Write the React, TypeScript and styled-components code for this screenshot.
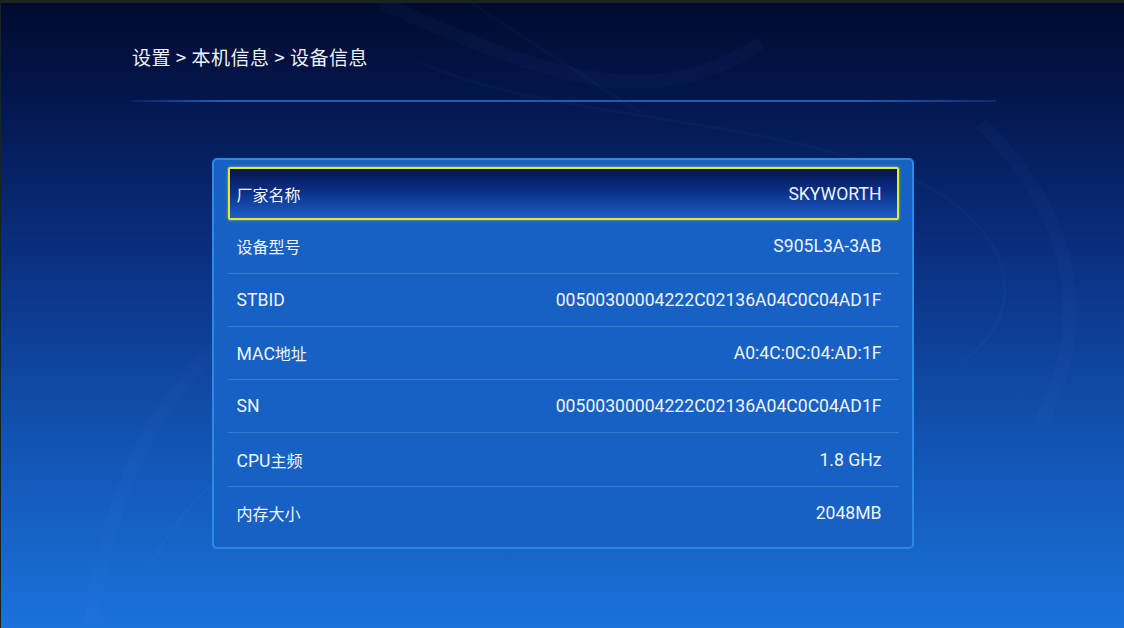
import React from "react";
import styled, { createGlobalStyle } from "styled-components";

const GlobalStyle = createGlobalStyle`
  html, body {
    margin: 0;
    padding: 0;
    background: #1c2420;
  }
  body {
    font-family: Roboto, "Noto Sans CJK SC", sans-serif;
  }
`;

const Screen = styled.div`
  position: relative;
  width: 1123px;
  height: 625px;
  margin: 3px 0 0 1px;
  overflow: hidden;
  background: linear-gradient(
    180deg,
    #010b2e 0%,
    #03154a 14%,
    #0a2f80 40%,
    #1253b2 70%,
    #1a72da 100%
  );
  display: flex;
  flex-direction: column;
`;

const Swirls = styled.svg`
  position: absolute;
  inset: 0;
  pointer-events: none;
`;

const Header = styled.header`
  position: relative;
  margin: 0 128px 0 131px;
  padding-top: 40px;
`;

const Crumbs = styled.h1`
  margin: 0;
  font-size: 19px;
  font-weight: 400;
  line-height: 28px;
  letter-spacing: 0.5px;
  color: #eef2fa;
  font-family: "Noto Sans CJK SC", Roboto, sans-serif;
`;

const Rule = styled.div`
  margin-top: 29px;
  height: 2px;
  background: linear-gradient(
    90deg,
    rgba(30, 90, 190, 0.2) 0%,
    #1d5cb8 10%,
    #1d5cb8 85%,
    rgba(30, 90, 190, 0.3) 100%
  );
`;

const Panel = styled.section`
  position: relative;
  box-sizing: border-box;
  align-self: center;
  margin: 56px 0 0 0;
  width: 702px;
  padding: 7px 13px 7px 14px;
  background: #1761c4;
  border: 2px solid #2a8ae6;
  border-radius: 5px;
  display: flex;
  flex-direction: column;
`;

const Row = styled.div<{ $active?: boolean; $last?: boolean }>`
  height: 53.3px;
  box-sizing: border-box;
  display: flex;
  align-items: center;
  justify-content: space-between;
  padding: 0 17px 0 9px;
  color: #eef3fb;
  font-family: Roboto, "Noto Sans CJK SC", sans-serif;
  font-size: 17.6px;
  border-bottom: ${(p) =>
    p.$last || p.$active ? "none" : "1px solid rgba(110, 170, 235, 0.35)"};
  ${(p) =>
    p.$active &&
    `
    border: 2px solid #e6ea2a;
    border-radius: 2px;
    padding: 0 15px 0 7px;
    background: linear-gradient(180deg, #041452 0%, #0b2f86 45%, #1a5fc6 100%);
    box-shadow: 0 0 3px rgba(230, 234, 42, 0.6);
  `}
`;

const Label = styled.span``;

const Han = styled.span`
  font-family: "Noto Sans CJK SC", sans-serif;
  font-size: 16px;
  font-weight: 400;
  color: #f2f6fc;
`;

const Value = styled.span``;

const info = [
  { label: "厂家名称", value: "SKYWORTH" },
  { label: "设备型号", value: "S905L3A-3AB" },
  { label: "STBID", value: "00500300004222C02136A04C0C04AD1F" },
  { label: "MAC地址", value: "A0:4C:0C:04:AD:1F" },
  { label: "SN", value: "00500300004222C02136A04C0C04AD1F" },
  { label: "CPU主频", value: "1.8 GHz" },
  { label: "内存大小", value: "2048MB" },
];

// split label into latin / chinese runs so each gets its own size
const renderLabel = (text: string) =>
  text
    .split(/([\u4e00-\u9fff]+)/)
    .filter(Boolean)
    .map((part, i) =>
      /[\u4e00-\u9fff]/.test(part) ? <Han key={i}>{part}</Han> : part
    );

export default function App() {
  return (
    <>
      <GlobalStyle />
      <Screen>
        <Swirls width="1123" height="625" viewBox="0 0 1123 625">
          <g fill="none" stroke="rgba(120,170,255,0.03)" strokeWidth="14">
            <path d="M380 0 C 520 60, 640 120, 760 40" />
            <path d="M90 620 C 120 420, 200 300, 420 250 C 560 220, 700 260, 820 330" />
            <path d="M980 120 C 1060 200, 1100 300, 1040 420" />
          </g>
          <g fill="none" stroke="rgba(140,190,255,0.03)" strokeWidth="3">
            <path d="M420 60 C 560 120, 760 110, 920 180 C 1000 220, 1040 300, 960 360" />
            <path d="M150 560 C 200 470, 280 420, 360 430" />
            <path d="M470 0 L 640 110" />
          </g>
        </Swirls>
        <Header>
          <Crumbs>设置 &gt; 本机信息 &gt; 设备信息</Crumbs>
          <Rule />
        </Header>
        <Panel>
          {info.map((item, i) => (
            <Row
              key={item.label}
              $active={i === 0}
              $last={i === info.length - 1}
            >
              <Label>{renderLabel(item.label)}</Label>
              <Value>{item.value}</Value>
            </Row>
          ))}
        </Panel>
      </Screen>
    </>
  );
}
